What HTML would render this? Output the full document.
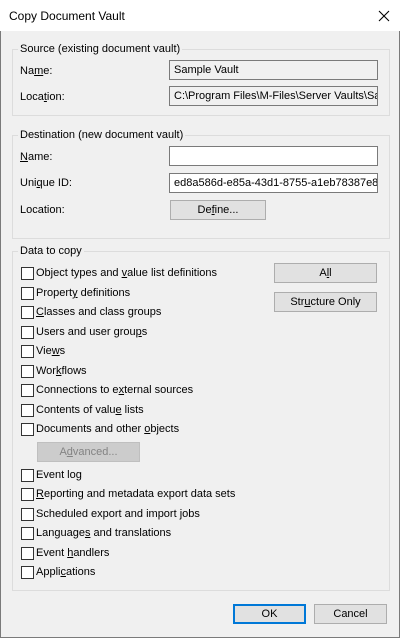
<!DOCTYPE html>
<html><head><style>
*{margin:0;padding:0;box-sizing:border-box}
body{width:400px;height:638px;background:#f0f0f0;font-family:"Liberation Sans",sans-serif;font-size:11px;color:#000;position:relative;overflow:hidden}
.win{position:absolute;left:0;top:0;width:400px;height:638px;border:1px solid #7a7a7a;border-top:1px solid #aaa}
.title{position:absolute;left:0;top:0;width:400px;height:31px;background:#fff}
.a{position:absolute;white-space:nowrap;line-height:14px}
.g{position:absolute;border:1px solid #dcdcdc}
.gl{position:absolute;background:#f0f0f0;padding:0 2px;line-height:14px}
.tb{position:absolute;border:1px solid #7a7a7a;background:#fff;height:20px;padding-left:4px;line-height:18px;overflow:hidden;white-space:nowrap}
.tb.ro{background:#f0f0f0}
.btn{position:absolute;background:#e1e1e1;border:1px solid #adadad;text-align:center;line-height:18px;height:20px}
.cb{position:absolute;left:21px;width:13px;height:13px;border:1px solid #333;background:#fff}
u{text-decoration:underline}
</style></head><body>
<div class="win"></div>
<div class="title"></div>
<div class="a" style="left:9px;top:9px;font-size:12px">Copy Document Vault</div>
<svg style="position:absolute;left:378px;top:10px" width="12" height="12"><path d="M1 1L11 11M11 1L1 11" stroke="#000" stroke-width="1.1"/></svg>

<div class="g" style="left:12px;top:49px;width:378px;height:67px"></div>
<div class="gl" style="left:18px;top:42px">Source (existing document vault)</div>
<div class="a" style="left:20px;top:64px">Na<u>m</u>e:</div>
<div class="tb ro" style="left:169px;top:60px;width:209px">Sample Vault</div>
<div class="a" style="left:20px;top:90px">Loca<u>t</u>ion:</div>
<div class="tb ro" style="left:169px;top:86px;width:209px">C:\Program Files\M-Files\Server Vaults\Sa</div>

<div class="g" style="left:12px;top:135px;width:378px;height:104px"></div>
<div class="gl" style="left:18px;top:128px">Destination (new document vault)</div>
<div class="a" style="left:20px;top:150px"><u>N</u>ame:</div>
<div class="tb" style="left:169px;top:146px;width:209px"></div>
<div class="a" style="left:20px;top:176px">Uni<u>q</u>ue ID:</div>
<div class="tb" style="left:169px;top:173px;width:209px">ed8a586d-e85a-43d1-8755-a1eb78387e8</div>
<div class="a" style="left:20px;top:203px">Location:</div>
<div class="btn" style="left:170px;top:200px;width:96px">De<u>f</u>ine...</div>

<div class="g" style="left:12px;top:251px;width:378px;height:340px"></div>
<div class="gl" style="left:18px;top:244px">Data to copy</div>
<div class="btn" style="left:274px;top:263px;width:103px">A<u>l</u>l</div>
<div class="btn" style="left:274px;top:292px;width:103px">Str<u>u</u>cture Only</div>

<div class="cb" style="top:267px"></div><div class="a" style="left:36px;top:266px">Object types and <u>v</u>alue list definitions</div>
<div class="cb" style="top:287px"></div><div class="a" style="left:36px;top:286px">Propert<u>y</u> definitions</div>
<div class="cb" style="top:306px"></div><div class="a" style="left:36px;top:305px"><u>C</u>lasses and class groups</div>
<div class="cb" style="top:326px"></div><div class="a" style="left:36px;top:325px">Users and user grou<u>p</u>s</div>
<div class="cb" style="top:345px"></div><div class="a" style="left:36px;top:344px">Vie<u>w</u>s</div>
<div class="cb" style="top:365px"></div><div class="a" style="left:36px;top:364px">Wor<u>k</u>flows</div>
<div class="cb" style="top:384px"></div><div class="a" style="left:36px;top:383px">Connections to e<u>x</u>ternal sources</div>
<div class="cb" style="top:404px"></div><div class="a" style="left:36px;top:403px">Contents of valu<u>e</u> lists</div>
<div class="cb" style="top:423px"></div><div class="a" style="left:36px;top:422px">Documents and other <u>o</u>bjects</div>
<div class="btn" style="left:37px;top:442px;width:103px;background:#ccc;border-color:#bfbfbf;color:#838383">A<u>d</u>vanced...</div>
<div class="cb" style="top:469px"></div><div class="a" style="left:36px;top:468px">Event lo<u>g</u></div>
<div class="cb" style="top:488px"></div><div class="a" style="left:36px;top:487px"><u>R</u>eporting and metadata export data sets</div>
<div class="cb" style="top:508px"></div><div class="a" style="left:36px;top:507px">Scheduled export and import <u>j</u>obs</div>
<div class="cb" style="top:527px"></div><div class="a" style="left:36px;top:526px">Language<u>s</u> and translations</div>
<div class="cb" style="top:547px"></div><div class="a" style="left:36px;top:546px">Event <u>h</u>andlers</div>
<div class="cb" style="top:566px"></div><div class="a" style="left:36px;top:565px">Appli<u>c</u>ations</div>

<div class="btn" style="left:233px;top:604px;width:73px;border:2px solid #0078d7;line-height:16px">OK</div>
<div class="btn" style="left:314px;top:604px;width:73px">Cancel</div>
</body></html>
